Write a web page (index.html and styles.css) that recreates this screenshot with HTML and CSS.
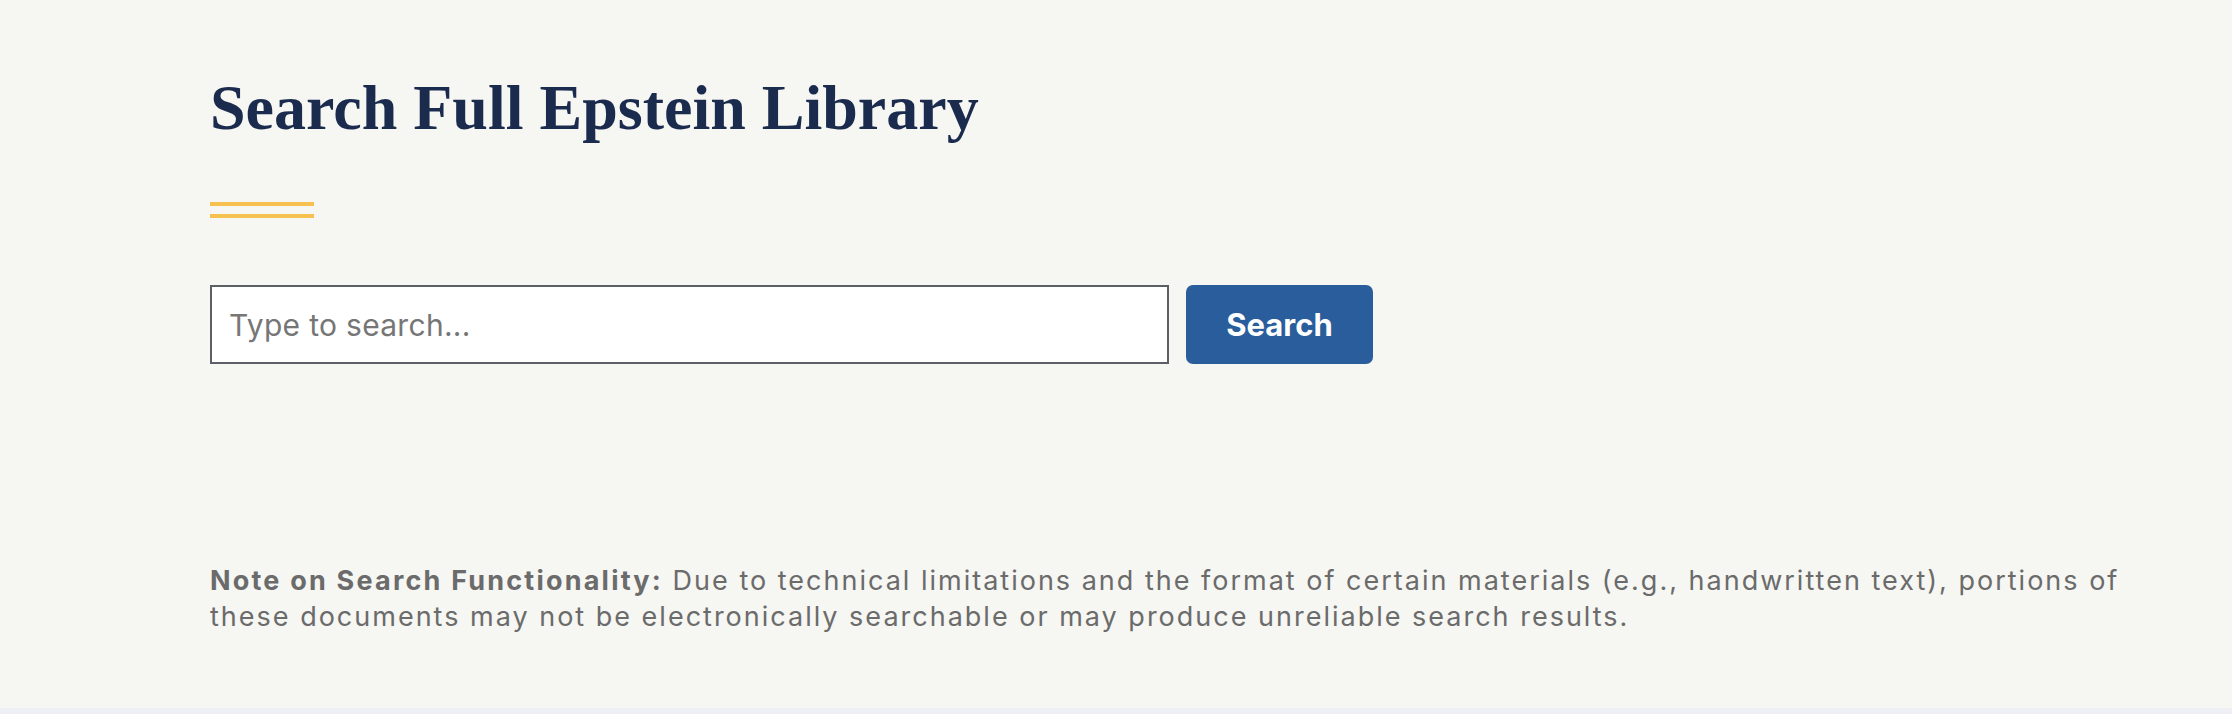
FILE: index.html
```html
<!DOCTYPE html>
<html lang="en">
<head>
<meta charset="utf-8">
<title>Search Full Epstein Library</title>
<link rel="stylesheet" href="styles.css">
</head>
<body>
<main class="page">
  <h1 class="title">Search Full Epstein Library</h1>
  <div class="accent"><span></span><span></span></div>
  <form class="search" onsubmit="return false">
    <input class="search-input" type="text" placeholder="Type to search...">
    <button class="search-btn" type="submit">Search</button>
  </form>
  <p class="note"><strong>Note on Search Functionality:</strong> Due to technical limitations and the format of certain materials (e.g., handwritten text), portions of these documents may not be electronically searchable or may produce unreliable search results.</p>
</main>
<div class="strip"></div>
</body>
</html>
```
FILE: styles.css
```css
html, body {
  margin: 0;
  padding: 0;
}
body {
  background: #f6f6f2;
  min-height: 100vh;
  display: flex;
  flex-direction: column;
  font-family: Inter, "Liberation Sans", Arial, sans-serif;
}
.page {
  flex: 1;
  padding: 69px 0 0 210px;
}
.title {
  margin: 0;
  font-family: "Liberation Serif", "Times New Roman", serif;
  font-weight: 700;
  font-size: 64px;
  line-height: 77px;
  color: #1b2b4e;
}
.accent {
  margin-top: 56px;
  display: flex;
  flex-direction: column;
  gap: 8px;
  width: 104px;
}
.accent span {
  display: block;
  height: 4px;
  background: #f6c14f;
}
.search {
  margin: 67px 0 0;
  display: flex;
  gap: 17px;
}
.search-input {
  box-sizing: border-box;
  width: 959px;
  height: 79px;
  margin: 0;
  border: 2px solid #5c5f66;
  border-radius: 0;
  background: #fff;
  padding: 0 17px;
  font-family: Inter, "Liberation Sans", Arial, sans-serif;
  font-size: 30px;
  letter-spacing: 0.3px;
  color: #1b1b1b;
  outline: none;
}
.search-input::placeholder {
  color: #767676;
  opacity: 1;
}
.search-btn {
  box-sizing: border-box;
  width: 187px;
  height: 79px;
  margin: 0;
  border: 0;
  border-radius: 7px;
  background: #295d9b;
  color: #fff;
  font-family: Inter, "Liberation Sans", Arial, sans-serif;
  font-weight: 700;
  font-size: 31px;
  cursor: pointer;
}
.note {
  margin: 199px 0 0;
  max-width: 1950px;
  font-size: 27px;
  letter-spacing: 2px;
  line-height: 36px;
  color: #6b6b6b;
}
.note strong {
  font-weight: 700;
  letter-spacing: 2.2px;
}
.strip {
  height: 6px;
  background: #eef0f6;
}
```
